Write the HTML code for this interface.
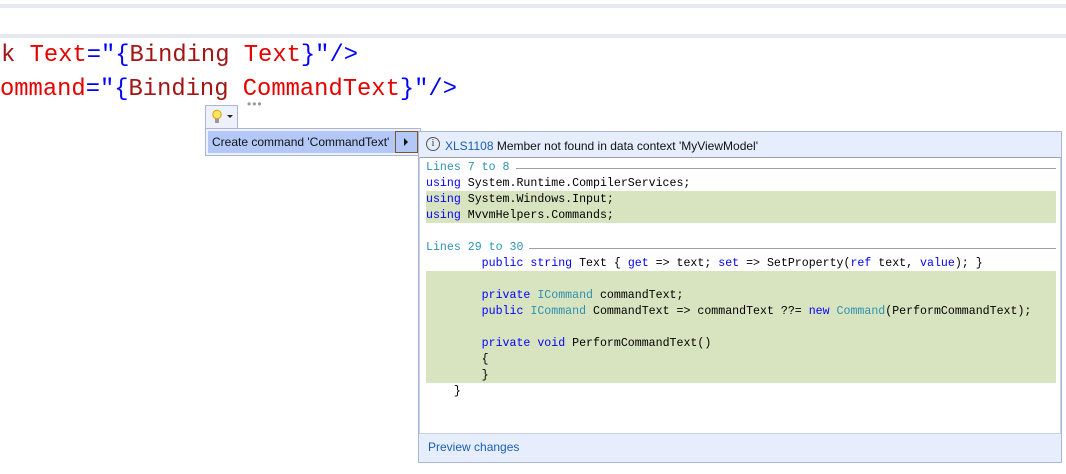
<!DOCTYPE html>
<html><head><meta charset="utf-8"><style>
*{margin:0;padding:0;box-sizing:border-box}
body{width:1066px;height:474px;background:#fff;position:relative;overflow:hidden;font-family:"Liberation Sans",sans-serif}
.a{position:absolute}
.big{font-family:"Liberation Mono",monospace;font-size:23.8px;white-space:pre;line-height:34px}
.r{color:#e50000}.dr{color:#a31515}.b{color:#0000ff}
.code{font-family:"Liberation Mono",monospace;font-size:11.6px;white-space:pre;line-height:16px;color:#000}
.k{color:#0000ff}.t{color:#2b91af}
.hd{color:#2b91af;display:flex;align-items:center}
.hd i{flex:1;height:1px;background:#a0a0a0;margin-left:6px}
</style></head><body>
<div class="a" style="left:0;top:4px;width:1066px;height:4px;background:#e8e8f0"></div>
<div class="a" style="left:0;top:34px;width:1066px;height:4px;background:#e8e8f0"></div>
<div class="a big" style="left:1px;top:39px"><span class="dr">k</span> <span class="r">Text</span><span class="b">="{</span><span class="dr">Binding</span> <span class="r">Text</span><span class="b">}"/&gt;</span></div>
<div class="a big" style="left:0;top:73px"><span class="r">ommand</span><span class="b">="{</span><span class="dr">Binding</span> <span class="r">CommandText</span><span class="b">}"/&gt;</span></div>
<div class="a" style="left:247px;top:97px;font-size:12px;color:#999;letter-spacing:1px">•••</div>
<div class="a" style="left:205px;top:105px;width:33px;height:24px;background:#eef1fb;border:1px solid #a9b7d6">
<svg class="a" style="left:5px;top:3px" width="12" height="16" viewBox="0 0 12 16"><circle cx="6" cy="5.5" r="4.2" fill="#ffe36b" stroke="#d6a400"/><rect x="4" y="10" width="4" height="4" fill="#999"/></svg>
<svg class="a" style="left:21px;top:9px" width="6" height="4"><path d="M0 0h6L3 3z" fill="#222"/></svg></div>
<div class="a" style="left:205px;top:128px;width:216px;height:28px;background:#eef1fb;border:1px solid #a9b7d6"></div>
<div class="a" style="left:208px;top:131px;width:188px;height:22px;background:#b4c8f8;font-size:12px;line-height:22px;padding-left:4px;color:#111;white-space:nowrap">Create command 'CommandText'</div>
<div class="a" style="left:395px;top:131px;width:23px;height:22px;background:#b4c8f8;border:1px solid #7a5a2a"><svg class="a" style="left:8px;top:6px" width="5" height="8"><path d="M0 0v8l4-4z" fill="#111"/></svg></div>
<div class="a" style="left:418px;top:131px;width:644px;height:332px;background:#e6edfc;border:1px solid #a9b7d6"></div>
<div class="a" style="left:426px;top:137px;width:14px;height:14px;border:1px solid #555;border-radius:50%;font-size:10px;line-height:12px;text-align:center;color:#333;font-family:'Liberation Serif',serif">i</div>
<div class="a" style="left:445px;top:138px;font-size:12px;line-height:16px;color:#111"><span style="color:#1a5fb4">XLS1108</span> Member not found in data context 'MyViewModel'</div>
<div class="a" style="left:419px;top:157px;width:642px;height:277px;background:#fff;border-top:1px solid #a0a0a0;border-left:1px solid #c8d0e4;border-right:1px solid #c8d0e4;border-bottom:1px solid #c8d0e4"></div>
<div class="a" style="left:426px;top:191px;width:630px;height:32px;background:#d8e3c0"></div>
<div class="a" style="left:426px;top:271px;width:630px;height:112px;background:#d8e3c0"></div>
<div class="a code" style="left:426px;top:160px;width:630px"><div class="hd">Lines 7 to 8<i></i></div><span class="k">using</span> System.Runtime.CompilerServices;
<span class="k">using</span> System.Windows.Input;
<span class="k">using</span> MvvmHelpers.Commands;

<div class="hd">Lines 29 to 30<i></i></div>        <span class="k">public</span> <span class="k">string</span> Text { <span class="k">get</span> =&gt; text; <span class="k">set</span> =&gt; SetProperty(<span class="k">ref</span> text, <span class="k">value</span>); }

        <span class="k">private</span> <span class="t">ICommand</span> commandText;
        <span class="k">public</span> <span class="t">ICommand</span> CommandText =&gt; commandText ??= <span class="k">new</span> <span class="t">Command</span>(PerformCommandText);

        <span class="k">private</span> <span class="k">void</span> PerformCommandText()
        {
        }
    }</div>
<div class="a" style="left:428px;top:440px;font-size:12px;color:#1a5fb4">Preview changes</div>
</body></html>
